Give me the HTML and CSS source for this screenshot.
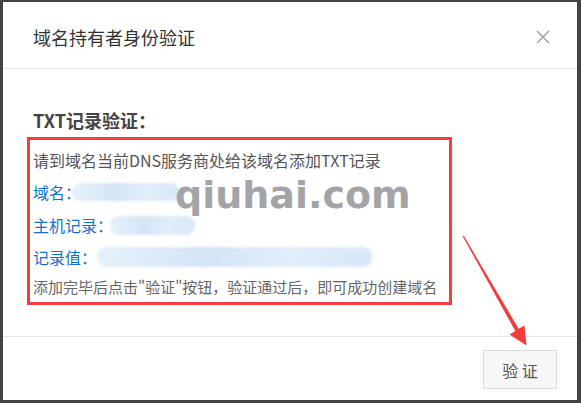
FILE: index.html
```html
<!DOCTYPE html>
<html lang="zh-CN">
<head>
  <meta charset="UTF-8" />
  <meta name="viewport" content="width=device-width, initial-scale=1.0"/>
  <title>域名持有者身份验证</title>
  <link rel="stylesheet" href="styles.css">
</head>
<body>
  <div class="dialog">
    <div class="dlg-head">
      <span class="dlg-title">域名持有者身份验证</span>
      <svg class="dlg-close" width="16" height="16" viewBox="0 0 16 16">
        <path d="M2 2 L14 14 M14 2 L2 14" stroke="#9a9a9a" stroke-width="1.4" fill="none"/>
      </svg>
    </div>

    <div class="dlg-body">
      <div class="sec-title">TXT记录验证：</div>
      <div class="txt-box">
        <div class="tip">请到域名当前DNS服务商处给该域名添加TXT记录</div>
        <div class="row row-domain"><span class="label">域名：</span><span class="mask mask-domain"></span></div>
        <div class="row row-host"><span class="label">主机记录：</span><span class="mask mask-host"></span></div>
        <div class="row row-value"><span class="label">记录值：</span><span class="mask mask-value"></span></div>
        <div class="note">添加完毕后点击"验证"按钮，验证通过后，即可成功创建域名</div>
      </div>
    </div>

    <div class="dlg-foot">
      <button class="btn">验 证</button>
    </div>
  </div>

  <!-- stuff pasted over the screenshot -->
  <div class="watermark">qiuhai.com</div>
  <svg class="arrow" width="581" height="403" viewBox="0 0 581 403">
    <polygon points="462.6,236.2 463.6,235.6 518.7,328.8 524.5,325.5 526.5,345.5 509.5,334.5 515.3,331" fill="#f43c3c"/>
  </svg>
</body>
</html>
```

FILE: styles.css
```css
html, body {
  margin: 0;
  height: 100%;
}
body {
  background: #434343;
  font-family: "Noto Sans CJK SC", "Noto Sans", sans-serif;
  padding: 2px 4px 3px 3px;
  box-sizing: border-box;
  position: relative;
  overflow: hidden;
}
.dialog {
  background: #fff;
  height: 398px;
  display: flex;
  flex-direction: column;
}
.dlg-head {
  display: flex;
  align-items: center;
  justify-content: space-between;
  height: 67px;
  padding: 3px 26px 0 30px;
  box-sizing: border-box;
  border-bottom: 1px solid #e6e6e6;
}
.dlg-title {
  font-size: 18px;
  line-height: 24px;
  color: #333;
}
.dlg-close {
  display: block;
}
.dlg-body {
  flex: 1;
  padding: 39px 0 0 24px;
}
.sec-title {
  font-size: 18px;
  line-height: 24px;
  font-weight: bold;
  color: #444;
  padding-left: 6px;
}
.txt-box {
  margin-top: 5px;
  width: 416px;
  height: 162px;
  border: 3px solid #fa3c3c;
  padding: 5px 0 0 3px;
  box-sizing: content-box;
}
.txt-box {
  height: 157px;
}
.tip {
  font-size: 16px;
  line-height: 31px;
  color: #555;
}
.row {
  display: flex;
  align-items: center;
  font-size: 16px;
}
.row-domain { height: 32px; }
.row-host { height: 34px; }
.row-value { height: 30px; }
.label {
  color: #1470d0;
  line-height: 20px;
}
.mask {
  display: block;
  border-radius: 9px;
  background: linear-gradient(90deg, #e6f0f9, #d4e5f5 40%, #e1edf8 70%, #d7e7f6);
  filter: blur(1.5px);
}
.mask-domain {
  width: 108px;
  height: 18px;
  margin-left: -9px;
}
.mask-host {
  width: 85px;
  height: 19px;
  margin-left: -3px;
}
.mask-value {
  width: 275px;
  height: 20px;
  margin-left: 0;
}
.note {
  font-size: 15px;
  line-height: 30px;
  color: #666;
}
.dlg-foot {
  display: flex;
  justify-content: flex-end;
  border-top: 1px solid #e6e6e6;
  padding: 13px 20px 11px 0;
}
.btn {
  width: 74px;
  height: 39px;
  background: #f7f7f7;
  border: 1px solid #dcdcdc;
  font-family: "Noto Sans CJK SC", sans-serif;
  font-size: 16px;
  color: #555;
  padding: 0;
  cursor: pointer;
}
.watermark {
  position: absolute;
  left: 175px;
  top: 172px;
  font-family: "DejaVu Sans", sans-serif;
  font-weight: bold;
  font-size: 38px;
  line-height: 46px;
  color: #a4a3a7;
}
.arrow {
  position: absolute;
  left: 0;
  top: 0;
  pointer-events: none;
}
```
